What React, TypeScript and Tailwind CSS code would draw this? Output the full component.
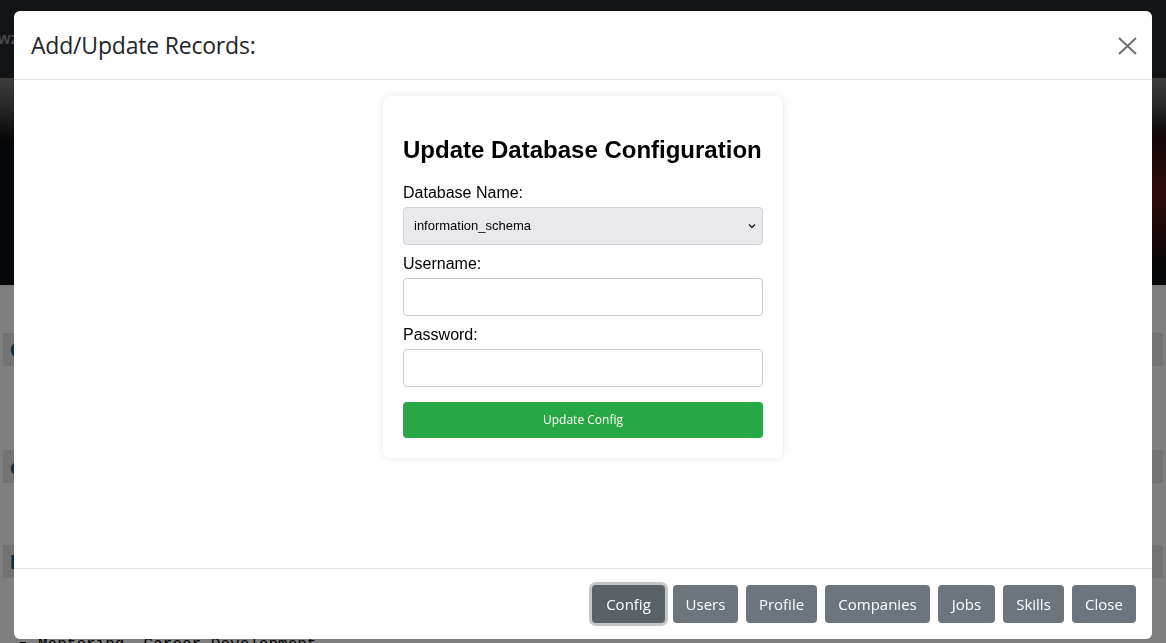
import { useState } from "react";

const navButtons = [
    { label: "Config", w: "w-[73px]" },
    { label: "Users", w: "w-[65px]" },
    { label: "Profile", w: "w-[71px]" },
    { label: "Companies", w: "w-[105px]" },
    { label: "Jobs", w: "w-[57px]" },
    { label: "Skills", w: "w-[61px]" },
    { label: "Close", w: "w-[64px]" },
];

function CloseIcon() {
    return (
        <svg width="19" height="18" viewBox="0 0 19 18" fill="none">
            <path d="M1 1 L18 17 M18 1 L1 17" stroke="#6f6f6f" strokeWidth="2" />
        </svg>
    );
}

function Chevron() {
    return (
        <svg width="8" height="6" viewBox="0 0 8 6" fill="none">
            <path d="M1 1.5 L4 4.5 L7 1.5" stroke="#1f1f1f" strokeWidth="1.4" />
        </svg>
    );
}

function PageBehind() {
    return (
        <div className="min-h-screen bg-white font-['Liberation_Sans',sans-serif]">
            <div className="h-[78px] bg-[#24262a] flex items-center">
                <span className="text-[#8a8f96] text-[16px] font-bold -ml-[2px]">wz</span>
            </div>
            <div className="h-[207px] bg-[radial-gradient(ellipse_at_85%_55%,#7a1a1c_0%,#3a0e10_25%,transparent_50%),linear-gradient(180deg,#7c7c7c_0%,#4a4a4a_15%,#0c0e10_30%,#0c0e10_100%)]" />
            <div className="pt-[48px] px-[3px]">
                <div className="h-[33px] bg-[#e6e6e6] flex items-center pl-[7px] text-[#0b5cad] text-[20px] font-bold">C</div>
                <div className="h-[84px]" />
                <div className="h-[33px] bg-[#e6e6e6] flex items-center pl-[7px] text-[#0b5cad] text-[20px] font-bold">c</div>
                <div className="h-[62px]" />
                <div className="h-[33px] bg-[#e6e6e6] flex items-center pl-[7px] text-[#0b5cad] text-[20px] font-bold">I</div>
                <ul className="mt-[55px] pl-[17px] font-['Liberation_Mono',monospace] text-[16px] text-black">
                    <li className="flex items-center gap-[12px]">
                        <span className="w-[6px] h-[6px] bg-black" />
                        Mentoring, Career Development
                    </li>
                </ul>
            </div>
        </div>
    );
}

export default function App() {
    const [dbName, setDbName] = useState("information_schema");
    const [active] = useState("Config");

    return (
        <div className="relative">
            <PageBehind />

            <div className="fixed inset-0 bg-black/50" />

            <div className="fixed left-[14px] top-[11px] w-[1138px] h-[628px] bg-white rounded-[6px] flex flex-col">
                <div className="h-[69px] flex items-center justify-between pl-[17px] pr-[15px] border-b border-[#dee2e6]">
                    <h4 className="text-[23px] text-[#212529] font-['Open_Sans',sans-serif] tracking-[-0.2px]">
                        Add/Update Records:
                    </h4>
                    <button className="mt-[2px]">
                        <CloseIcon />
                    </button>
                </div>

                <div className="flex-1 flex justify-center pt-[16px]">
                    <div className="w-[400px] h-[362px] bg-white rounded-[8px] shadow-[0_0_10px_rgba(0,0,0,0.1)] p-[20px] font-['Liberation_Sans',sans-serif]">
                        <h2 className="text-[24px] font-bold text-black mt-[20px] mb-[20px] leading-[28px]">
                            Update Database Configuration
                        </h2>
                        <label className="block text-[16px] text-black leading-[18px] mb-[5px]">Database Name:</label>
                        <div className="relative">
                            <select
                                value={dbName}
                                onChange={(e) => setDbName(e.target.value)}
                                className="appearance-none w-full h-[38px] px-[10px] bg-[#e9e9ed] border border-[#d4d4d8] rounded-[4px] text-[13px] text-black outline-none"
                            >
                                <option>information_schema</option>
                                <option>mysql</option>
                                <option>performance_schema</option>
                            </select>
                            <span className="absolute right-[7px] top-[16px] pointer-events-none">
                                <Chevron />
                            </span>
                        </div>
                        <label className="block text-[16px] text-black leading-[18px] mt-[10px] mb-[5px]">Username:</label>
                        <input className="w-full h-[38px] px-[10px] border border-[#cccccc] rounded-[4px] outline-none" />
                        <label className="block text-[16px] text-black leading-[18px] mt-[10px] mb-[5px]">Password:</label>
                        <input type="password" className="w-full h-[38px] px-[10px] border border-[#cccccc] rounded-[4px] outline-none" />
                        <button className="mt-[15px] w-full h-[36px] bg-[#28a745] rounded-[4px] text-white text-[12px] font-['Open_Sans',sans-serif]">
                            Update Config
                        </button>
                    </div>
                </div>

                <div className="h-[71px] border-t border-[#dee2e6] flex items-center justify-end gap-[8px] pr-[16px] font-['Open_Sans',sans-serif]">
                    {navButtons.map((b) => (
                        <button
                            key={b.label}
                            className={
                                b.label === active
                                    ? `${b.w} h-[38px] rounded-[4px] bg-[#5a6268] text-white text-[15px] shadow-[0_0_0_3px_#c2c6c9]`
                                    : `${b.w} h-[38px] rounded-[4px] bg-[#6c757d] text-white text-[15px]`
                            }
                        >
                            {b.label}
                        </button>
                    ))}
                </div>
            </div>
        </div>
    );
}
